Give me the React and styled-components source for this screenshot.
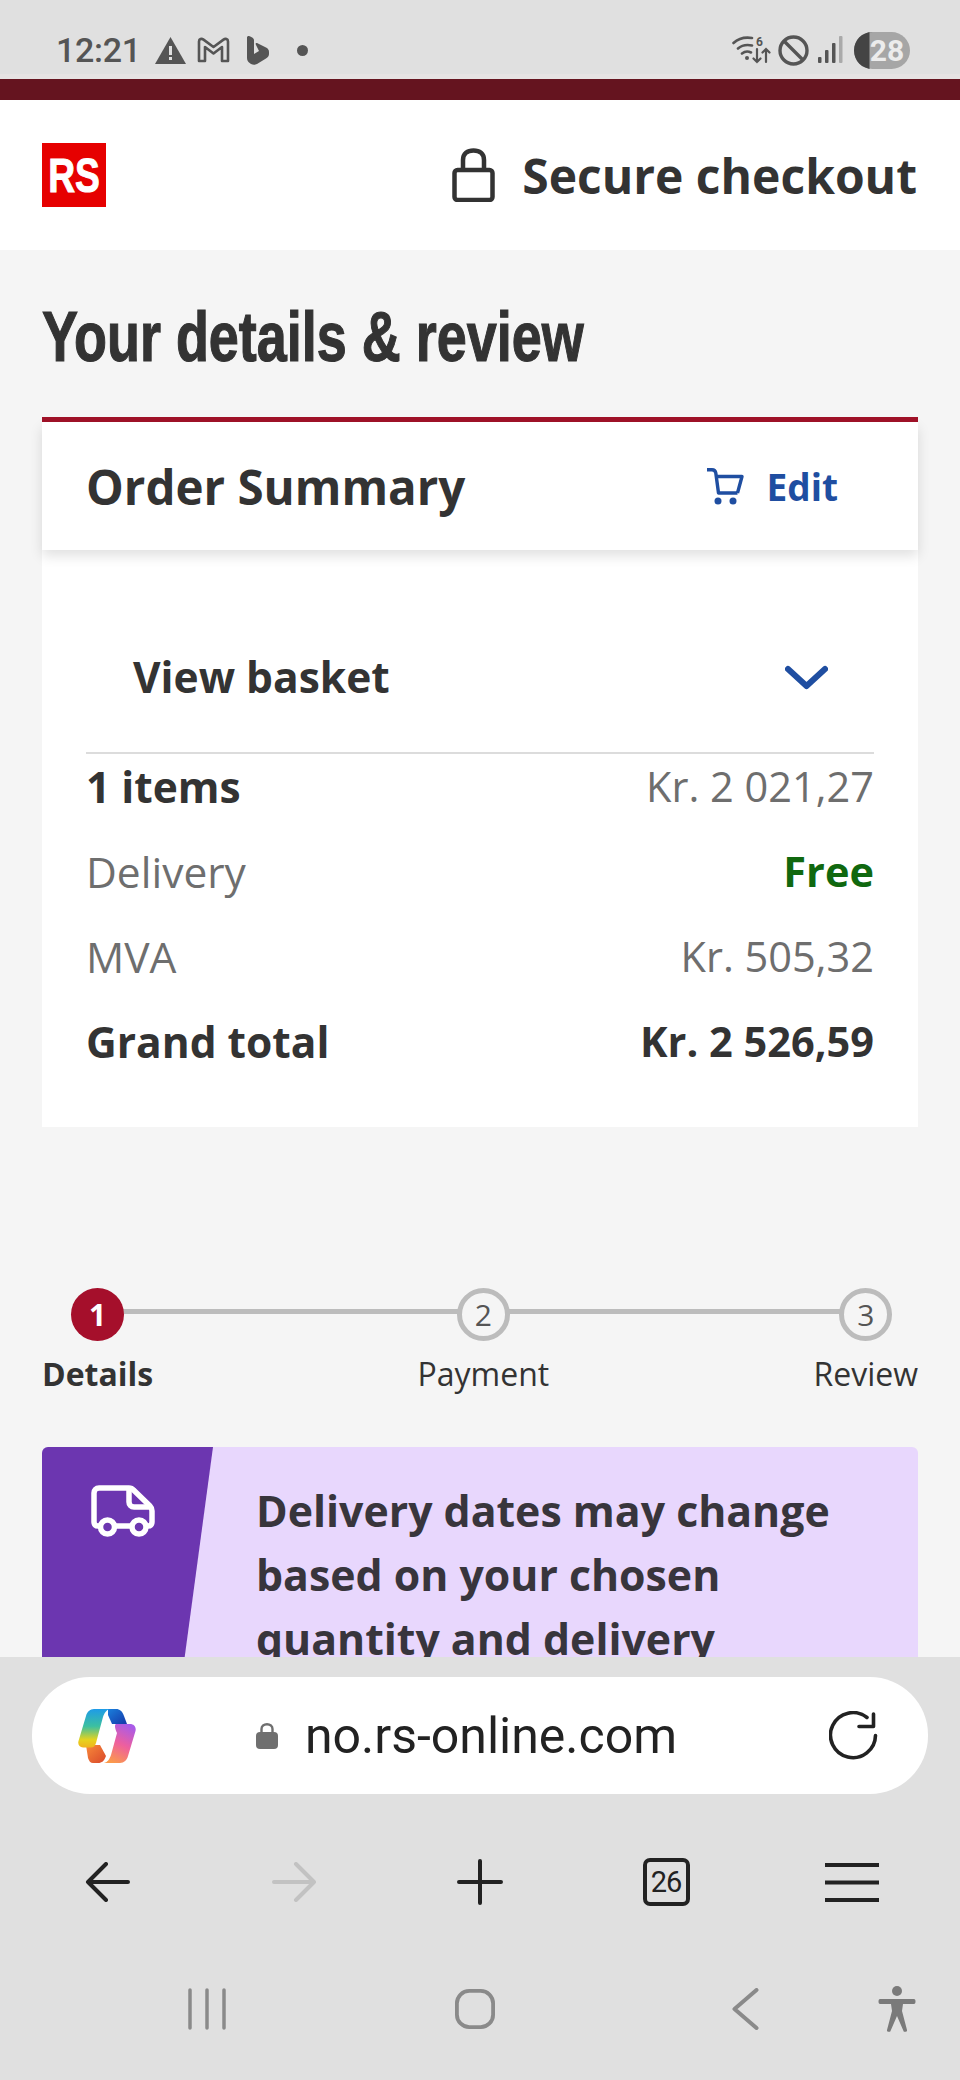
import React from "react";
import styled, { createGlobalStyle } from "styled-components";

const GlobalStyle = createGlobalStyle`
  html, body {
    margin: 0;
    padding: 0;
    background: #f5f5f5;
  }
  * {
    box-sizing: border-box;
  }
`;

const Screen = styled.div`
  width: 960px;
  height: 2080px;
  display: flex;
  flex-direction: column;
  overflow: hidden;
  font-family: "Open Sans", "Liberation Sans", sans-serif;
  color: #333;
`;

/* android status bar */
const StatusBar = styled.div`
  height: 79px;
  flex: none;
  background: #e0e0e0;
  border-bottom: 5px solid #e6e3e3;
  padding: 26px 50px 0 56px;
  display: flex;
  align-items: center;
  justify-content: space-between;
  color: #555;
`;

const StatusGroup = styled.div`
  display: flex;
  align-items: center;
`;

const Clock = styled.span`
  font-family: Roboto, "Liberation Sans", sans-serif;
  font-weight: 500;
  font-size: 34px;
  letter-spacing: -0.3px;
  margin-right: 14px;
`;

const BrandBar = styled.div`
  height: 21px;
  flex: none;
  background: #65141f;
`;

const Page = styled.main`
  flex: 1;
  min-height: 0;
  overflow: hidden;
  background: #f5f5f5;
`;

const Header = styled.header`
  height: 150px;
  background: #fff;
  padding: 0 43px 0 42px;
  display: flex;
  align-items: center;
  justify-content: space-between;
`;

const Logo = styled.div`
  width: 64px;
  height: 64px;
  background: #e60000;
  display: flex;
  align-items: center;
  justify-content: center;
  overflow: hidden;
`;

const LogoText = styled.span`
  display: block;
  font-family: "Liberation Sans", sans-serif;
  font-size: 49px;
  line-height: 64px;
  font-weight: 700;
  color: #fff;
  -webkit-text-stroke: 1px #fff;
  transform: scaleX(0.76);
`;

const SecureLabel = styled.div`
  display: flex;
  align-items: center;
  gap: 27px;
  font-size: 48px;
  font-weight: 700;
  color: #333;
`;

const Title = styled.h1`
  margin: 0;
  padding: 47px 42px 0;
  height: 167px;
`;

const TitleText = styled.span`
  display: block;
  width: max-content;
  font-family: "Liberation Sans", sans-serif;
  font-weight: 700;
  font-size: 71px;
  line-height: 80px;
  color: #333;
  -webkit-text-stroke: 1.2px #333;
  transform: scaleX(0.76);
  transform-origin: left center;
`;

const Card = styled.section`
  margin: 0 42px;
  background: #fff;
  border-top: 5px solid #a01228;
`;

const CardHead = styled.div`
  height: 128px;
  padding: 0 80px 0 44px;
  display: flex;
  align-items: center;
  justify-content: space-between;
  background: #fff;
  box-shadow: 0 6px 12px rgba(0, 0, 0, 0.12);
`;

const CardTitle = styled.h2`
  margin: 0;
  font-size: 47.5px;
  font-weight: 700;
  color: #333;
`;

const EditLink = styled.a`
  display: flex;
  align-items: center;
  gap: 23px;
  font-size: 37px;
  font-weight: 700;
  color: #1f4ea1;
`;

const CardBody = styled.div`
  padding: 0 44px 59px;
`;

const BasketToggle = styled.div`
  height: 204px;
  padding: 50px 46px 0 47px;
  display: flex;
  align-items: center;
  justify-content: space-between;
  border-bottom: 2px solid #dcdcdc;
  font-size: 42.5px;
  font-weight: 700;
  color: #333;
`;

const Rows = styled.div`
  padding-top: 5px;
  display: flex;
  flex-direction: column;
  gap: 31px;
`;

const Row = styled.div`
  height: 54px;
  display: flex;
  align-items: center;
  justify-content: space-between;
  font-size: 42.5px;
  font-weight: ${({ $bold }) => ($bold ? 700 : 400)};
  color: ${({ $bold }) => ($bold ? "#333" : "#6e6e6e")};
`;

const Amount = styled.span`
  font-size: 41.5px;
  font-weight: ${({ $bold }) => ($bold ? 700 : 400)};
  color: ${({ $color }) => $color || "inherit"};
`;

const Stepper = styled.ol`
  position: relative;
  list-style: none;
  margin: 161px 42px 0;
  padding: 0;
  display: flex;
  justify-content: space-between;
`;

const Track = styled.div`
  position: absolute;
  top: 21px;
  left: 56px;
  right: 53px;
  height: 5px;
  background: #bcbcbc;
`;

const Step = styled.li`
  position: relative;
  display: flex;
  flex-direction: column;
  align-items: center;
  gap: 11px;
  font-size: 32px;
  line-height: 44px;
  font-weight: ${({ $active }) => ($active ? 700 : 400)};
  color: #333;
`;

const StepDot = styled.span`
  width: 53px;
  height: 53px;
  border-radius: 50%;
  display: flex;
  align-items: center;
  justify-content: center;
  font-size: 30px;
  font-weight: ${({ $active }) => ($active ? 700 : 400)};
  color: ${({ $active }) => ($active ? "#fff" : "#555")};
  background: ${({ $active }) => ($active ? "#a50f2b" : "#f5f5f5")};
  border: ${({ $active }) => ($active ? "none" : "5px solid #bcbcbc")};
`;

const Banner = styled.div`
  position: relative;
  margin: 51px 42px 0;
  height: 260px;
  background: #e8d7fd;
  border-radius: 6px 6px 0 0;
  overflow: hidden;
  padding: 32px 40px 0 214px;
  font-size: 42.8px;
  line-height: 64px;
  font-weight: 700;
  color: #38353c;
`;

const BannerFlag = styled.div`
  position: absolute;
  left: 0;
  top: 0;
  bottom: 0;
  width: 171px;
  background: #6c36b0;
  clip-path: polygon(0 0, 100% 0, 79.5% 100%, 0 100%);
  padding: 38px 0 0 49px;
`;

/* samsung internet bottom chrome */
const BrowserChrome = styled.div`
  flex: none;
  height: 423px;
  background: #e0e0e0;
  padding-top: 20px;
`;

const UrlBar = styled.div`
  margin: 0 32px;
  height: 117px;
  border-radius: 58px;
  background: #fff;
  padding: 0 50px 0 46px;
  display: flex;
  align-items: center;
  justify-content: space-between;
`;

const UrlText = styled.div`
  display: flex;
  align-items: center;
  gap: 27px;
  margin-right: 32px;
  font-family: Roboto, "Liberation Sans", sans-serif;
  font-size: 50px;
  color: #222;
`;

const Toolbar = styled.div`
  height: 110px;
  margin-top: 33px;
  padding: 0 15px;
  display: grid;
  grid-template-columns: repeat(5, 1fr);
  align-items: center;
  justify-items: center;
`;

const TabCount = styled.span`
  width: 47px;
  height: 48px;
  border: 4px solid #222;
  border-radius: 7px;
  display: flex;
  align-items: center;
  justify-content: center;
  font-family: Roboto, "Liberation Sans", sans-serif;
  font-size: 29px;
  letter-spacing: -1px;
  color: #222;
`;

const NavBar = styled.div`
  margin-top: 48px;
  height: 48px;
  padding-left: 187px;
  display: flex;
  align-items: center;
`;

const NavSlot = styled.div`
  width: 40px;
  display: flex;
  justify-content: center;
  margin-left: ${({ $gap }) => $gap || 0}px;
`;

function AlertIcon() {
  return (
    <svg width="31" height="27" viewBox="0 0 31 27" style={{ marginRight: 11 }}>
      <path d="M15.5 0 31 27H0z" fill="#555" />
      <rect x="14" y="9" width="3" height="9" fill="#e0e0e0" />
      <rect x="14" y="20" width="3" height="3" fill="#e0e0e0" />
    </svg>
  );
}

function MailIcon() {
  return (
    <svg width="33" height="26" viewBox="0 0 33 26" fill="none" stroke="#555" strokeWidth="2.6" style={{ marginRight: 17 }}>
      <path d="M2 24V4.5C2 2 4.5 1.2 6.5 2.6L16.5 10 26.5 2.6C28.5 1.2 31 2 31 4.5V24H25V10L16.5 16.5 8 10V24z" strokeLinejoin="round" />
    </svg>
  );
}

function BingIcon() {
  return (
    <svg width="22" height="29" viewBox="0 0 22 29" style={{ marginRight: 28 }}>
      <path d="M1 0C3 0 7 2 7 4V18L12 15 9 9C8 7 9 6.5 11 7.5L19 11.5C21 12.5 22 14 22 16V18C22 20 21 21 19 22.5L10 28C8 29 6 29 4 28L2 26.5C1 25.5 0 24 0 22V1z" fill="#555" />
    </svg>
  );
}

function WifiIcon() {
  return (
    <svg width="39" height="30" viewBox="0 0 39 30" fill="none" stroke="#555" strokeLinecap="round" style={{ marginRight: 7 }}>
      <path d="M1.5 8C7 3 14 2 20 3M6 13.5C10 10 15 9.5 20 10.5M10 18.5C12.5 16.5 16 16 19 17.5" strokeWidth="2.6" />
      <circle cx="15" cy="23" r="2" fill="#555" stroke="none" />
      <path d="M25 14V27M21.5 23.5 25 27 28.5 23.5M34 27V14M30.5 17.5 34 14 37.5 17.5" strokeWidth="2.2" />
      <text x="24" y="11" fontSize="12" fontWeight="700" fontFamily="Roboto, sans-serif" fill="#555" stroke="none">6</text>
    </svg>
  );
}

function BlockedIcon() {
  return (
    <svg width="31" height="31" viewBox="0 0 31 31" fill="none" stroke="#555" strokeWidth="3.4" style={{ marginRight: 9 }}>
      <circle cx="15.5" cy="15.5" r="13.5" />
      <path d="M6 6 25 25" />
    </svg>
  );
}

function SignalIcon() {
  return (
    <svg width="25" height="28" viewBox="0 0 25 28" style={{ marginRight: 11 }}>
      <rect x="0" y="21" width="3.5" height="6" rx="1" fill="#555" />
      <rect x="7" y="14" width="3.5" height="13" rx="1" fill="#555" />
      <rect x="14" y="7" width="3.5" height="20" rx="1" fill="#555" />
      <rect x="21" y="0" width="3.5" height="27" rx="1" fill="#aaa" />
    </svg>
  );
}

function BatteryIcon() {
  return (
    <svg width="56" height="37" viewBox="0 0 56 37">
      <rect x="0" y="0" width="56" height="37" rx="18.5" fill="#a6a6a6" />
      <path d="M15.5 0H18.5C8 0 0 8 0 18.5S8 37 18.5 37H15.5z" fill="#444" />
      <text x="33" y="29" textAnchor="middle" fontSize="30" fontWeight="700" fontFamily="Roboto, sans-serif" fill="#ececec">28</text>
    </svg>
  );
}

function PadlockIcon() {
  return (
    <svg width="43" height="54" viewBox="0 0 43 54" fill="none" stroke="#333" strokeWidth="4.5">
      <rect x="2.5" y="22" width="38" height="30" rx="3" strokeLinejoin="round" />
      <path d="M11 22V12C11 5.5 15.5 2.5 21.5 2.5S32 5.5 32 12V22" />
    </svg>
  );
}

function CartIcon() {
  return (
    <svg width="37" height="37" viewBox="0 0 37 37" fill="none" stroke="#1f4ea1" strokeWidth="3.4" strokeLinejoin="round">
      <path d="M0 1.7H5C7 1.7 8.5 3 8.8 5L11.5 25H30.5" />
      <path d="M9 8.5H35L30.5 25" />
      <circle cx="11" cy="33" r="3.5" fill="#1f4ea1" stroke="none" />
      <circle cx="26" cy="33" r="3.5" fill="#1f4ea1" stroke="none" />
    </svg>
  );
}

function ChevronIcon() {
  return (
    <svg width="43" height="28" viewBox="0 -4 43 28" fill="none" stroke="#1f4ea1" strokeWidth="6" strokeLinecap="round" strokeLinejoin="round">
      <path d="M3 3 21.5 20 40 3" />
    </svg>
  );
}

function TruckIcon() {
  return (
    <svg width="65" height="52" viewBox="0 0 65 52" fill="none" stroke="#fff" strokeWidth="5.5" strokeLinejoin="round">
      <path d="M9 41H7C4.5 41 3 39.5 3 37V8C3 5 5 3 8 3H38C40 3 41.5 3.8 42.5 5L59 21C60.5 22.5 61 24 61 26V37C61 39.5 59.5 41 57 41H55" />
      <path d="M38 3V17C38 20 40 22 43 22H60" />
      <path d="M24 41H41" />
      <circle cx="16.5" cy="42" r="7" />
      <circle cx="48" cy="42" r="7" />
    </svg>
  );
}

function CopilotIcon() {
  return (
    <svg width="58" height="54" viewBox="0 0 58 54">
      <defs>
        <linearGradient id="copilotLeft" x1="0" y1="0" x2="0" y2="1">
          <stop offset="0" stopColor="#1e9be8" />
          <stop offset="0.45" stopColor="#3cc0a0" />
          <stop offset="0.8" stopColor="#e6d31e" />
          <stop offset="1" stopColor="#f0b41e" />
        </linearGradient>
        <linearGradient id="copilotRight" x1="0.7" y1="0" x2="0.3" y2="1">
          <stop offset="0" stopColor="#a95be8" />
          <stop offset="0.5" stopColor="#ee5f9e" />
          <stop offset="1" stopColor="#fb9a4b" />
        </linearGradient>
        <linearGradient id="copilotTop" x1="0" y1="0" x2="1" y2="1">
          <stop offset="0" stopColor="#1a7fdc" />
          <stop offset="1" stopColor="#1537a8" />
        </linearGradient>
        <linearGradient id="copilotBottom" x1="0" y1="0" x2="1" y2="1">
          <stop offset="0" stopColor="#f88a3a" />
          <stop offset="1" stopColor="#d9482b" />
        </linearGradient>
      </defs>
      <path d="M30 0H38C42 0 44 2 46 7L49 15H34L30 6z" fill="url(#copilotTop)" />
      <path d="M8 36 22 36 28 47C26 52 24 54 20 54H15C12.5 54 11 52 10 49z" fill="url(#copilotBottom)" />
      <path d="M16 0H32C28 1 26.5 4 25 8L18 34C17 37 15.5 38.5 13 38.5H5C1.5 38.5 -0.5 35.5 0.5 32L8 7C9 3 12 0 16 0z" fill="url(#copilotLeft)" />
      <path d="M38 15H52C56 15 58.5 18 57.5 22L50 47C49 51 46 54 42 54H26C30 53 31.5 50 33 46L39 24C36 18 37 15 38 15z" fill="url(#copilotRight)" />
    </svg>
  );
}

function UrlLockIcon() {
  return (
    <svg width="22" height="26" viewBox="0 0 22 26" fill="#6f6f6f">
      <rect x="0" y="9" width="22" height="17" rx="4" />
      <path d="M5.5 10V6C5.5 3 8 1.2 11 1.2S16.5 3 16.5 6V10" fill="none" stroke="#6f6f6f" strokeWidth="2.4" />
    </svg>
  );
}

function ReloadIcon() {
  return (
    <svg width="49" height="49" viewBox="0 0 49 49" fill="none" stroke="#222" strokeWidth="3.6" strokeLinecap="round" strokeLinejoin="round">
      <path d="M38 6.5A22.5 22.5 0 1 0 46.5 24.5" />
      <path d="M30 15.5H44.5V3" />
    </svg>
  );
}

function ArrowIcon({ flip, color }) {
  return (
    <svg width="48" height="40" viewBox="0 0 48 40" fill="none" stroke={color} strokeWidth="4" strokeLinecap="round" strokeLinejoin="round" style={flip ? { transform: "scaleX(-1)" } : undefined}>
      <path d="M22 2 4 20 22 38M4 20H44" />
    </svg>
  );
}

function PlusIcon() {
  return (
    <svg width="46" height="46" viewBox="0 0 46 46" stroke="#222" strokeWidth="4" strokeLinecap="round">
      <path d="M23 2V44M2 23H44" />
    </svg>
  );
}

function MenuIcon() {
  return (
    <svg width="54" height="39" viewBox="0 0 54 39" stroke="#222" strokeWidth="4">
      <path d="M0 2H54M0 19.5H54M0 37H54" />
    </svg>
  );
}

function RecentsIcon() {
  return (
    <svg width="38" height="42" viewBox="0 0 38 42" stroke="#8a8a8a" strokeWidth="3.5" strokeLinecap="round">
      <path d="M2 2V40M19 2V40M36 2V40" />
    </svg>
  );
}

function HomeIcon() {
  return (
    <svg width="42" height="42" viewBox="0 0 42 42" fill="none" stroke="#8a8a8a" strokeWidth="4">
      <rect x="2" y="2" width="38" height="38" rx="13" />
    </svg>
  );
}

function BackIcon() {
  return (
    <svg width="27" height="42" viewBox="0 0 27 42" fill="none" stroke="#8a8a8a" strokeWidth="4" strokeLinecap="round" strokeLinejoin="round">
      <path d="M24.5 2 2.5 21 24.5 40" />
    </svg>
  );
}

function PersonIcon() {
  return (
    <svg width="38" height="46" viewBox="0 0 38 46" fill="#7a7a7a">
      <circle cx="19" cy="5" r="5" />
      <path d="M2 13H36C38 13 38 18 36 18H25L24 25 29 44C29.5 46 26 46.5 25.5 45L19 30 12.5 45C12 46.5 8.5 46 9 44L14 25 13 18H2C0 18 0 13 2 13z" />
    </svg>
  );
}

const steps = [
  { n: 1, label: "Details", active: true },
  { n: 2, label: "Payment" },
  { n: 3, label: "Review" },
];

const summary = [
  { label: "1 items", value: "Kr. 2 021,27", labelBold: true, color: "#6e6e6e" },
  { label: "Delivery", value: "Free", valueBold: true, color: "#10680f" },
  { label: "MVA", value: "Kr. 505,32" },
  { label: "Grand total", value: "Kr. 2 526,59", labelBold: true, valueBold: true },
];

export default function App() {
  return (
    <Screen>
      <GlobalStyle />
      <StatusBar>
        <StatusGroup>
          <Clock>12:21</Clock>
          <AlertIcon />
          <MailIcon />
          <BingIcon />
          <svg width="11" height="11" viewBox="0 0 11 11">
            <circle cx="5.5" cy="5.5" r="5.5" fill="#555" />
          </svg>
        </StatusGroup>
        <StatusGroup>
          <WifiIcon />
          <BlockedIcon />
          <SignalIcon />
          <BatteryIcon />
        </StatusGroup>
      </StatusBar>
      <BrandBar />
      <Page>
        <Header>
          <Logo>
            <LogoText>RS</LogoText>
          </Logo>
          <SecureLabel>
            <PadlockIcon />
            Secure checkout
          </SecureLabel>
        </Header>
        <Title>
          <TitleText>Your details &amp; review</TitleText>
        </Title>
        <Card>
          <CardHead>
            <CardTitle>Order Summary</CardTitle>
            <EditLink>
              <CartIcon />
              Edit
            </EditLink>
          </CardHead>
          <CardBody>
            <BasketToggle>
              View basket
              <ChevronIcon />
            </BasketToggle>
            <Rows>
              {summary.map((row) => (
                <Row key={row.label} $bold={row.labelBold}>
                  {row.label}
                  <Amount $bold={row.valueBold} $color={row.color}>
                    {row.value}
                  </Amount>
                </Row>
              ))}
            </Rows>
          </CardBody>
        </Card>
        <Stepper>
          <Track />
          {steps.map((step) => (
            <Step key={step.n} $active={step.active}>
              <StepDot $active={step.active}>{step.n}</StepDot>
              {step.label}
            </Step>
          ))}
        </Stepper>
        <Banner>
          <BannerFlag>
            <TruckIcon />
          </BannerFlag>
          Delivery dates may change
          <br />
          based on your chosen
          <br />
          quantity and delivery
        </Banner>
      </Page>
      <BrowserChrome>
        <UrlBar>
          <CopilotIcon />
          <UrlText>
            <UrlLockIcon />
            no.rs-online.com
          </UrlText>
          <ReloadIcon />
        </UrlBar>
        <Toolbar>
          <ArrowIcon color="#222" />
          <ArrowIcon flip color="#c2c2c2" />
          <PlusIcon />
          <TabCount>26</TabCount>
          <MenuIcon />
        </Toolbar>
        <NavBar>
          <NavSlot>
            <RecentsIcon />
          </NavSlot>
          <NavSlot $gap={228}>
            <HomeIcon />
          </NavSlot>
          <NavSlot $gap={230}>
            <BackIcon />
          </NavSlot>
          <NavSlot $gap={112}>
            <PersonIcon />
          </NavSlot>
        </NavBar>
      </BrowserChrome>
    </Screen>
  );
}
